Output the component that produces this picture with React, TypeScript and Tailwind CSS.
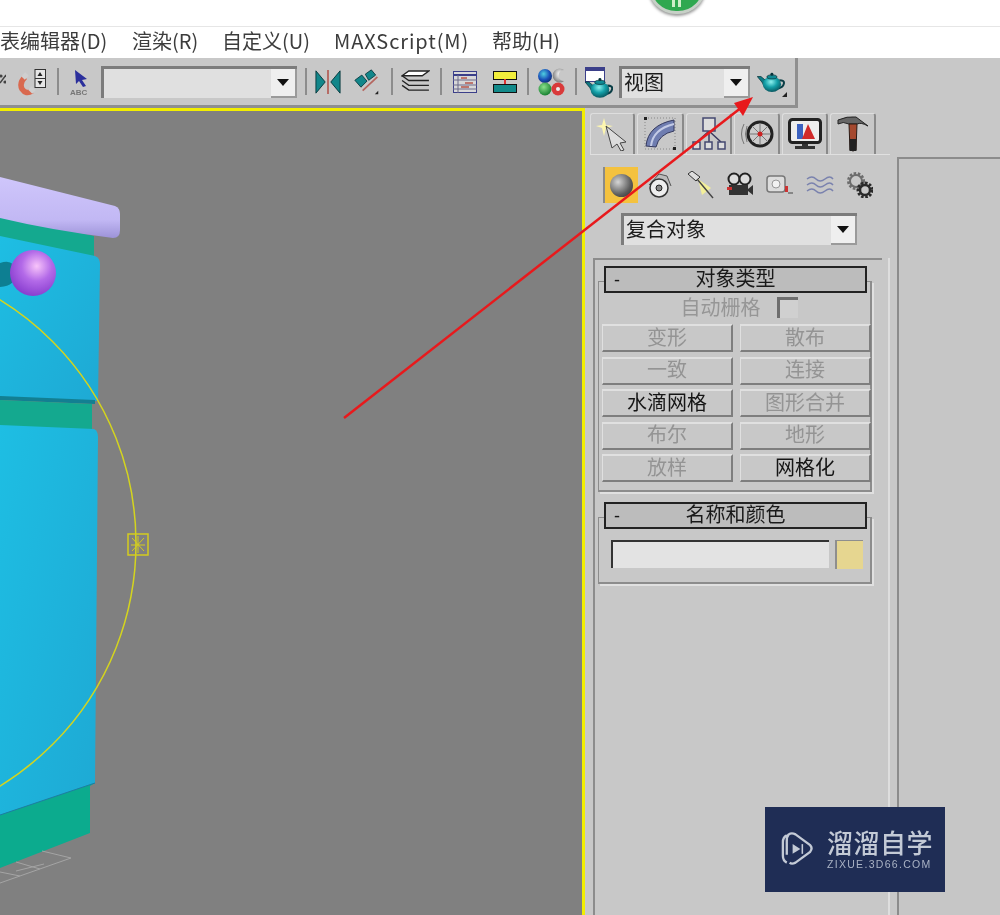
import React from 'react';

const FONT = "font-['Noto_Sans_CJK_SC','Noto_Sans',sans-serif]";

const Teapot = ({ className }: { className: string }) => (
  <svg viewBox="0 0 30 24" className={className}>
    <defs>
      <radialGradient id="pot" cx="0.45" cy="0.35" r="0.75">
        <stop offset="0" stopColor="#8df0ee" />
        <stop offset="0.45" stopColor="#14a0a8" />
        <stop offset="1" stopColor="#07414a" />
      </radialGradient>
    </defs>
    <path d="M0 6 L4 6 L10 11 L8 17 L5 12 Z" fill="#0e7a84" stroke="#07333a" strokeWidth="0.8" />
    <path d="M24 10 Q30 10 29 14 Q28 18 23 19" fill="none" stroke="#0a3e46" strokeWidth="2.2" />
    <ellipse cx="16" cy="14.5" rx="10" ry="8.5" fill="url(#pot)" />
    <ellipse cx="16" cy="6.5" rx="5.5" ry="2.2" fill="#118a94" stroke="#08343b" strokeWidth="0.8" />
    <circle cx="16" cy="3.5" r="1.6" fill="#08343b" />
  </svg>
);

const Sep = ({ ml }: { ml: string }) => <div className={`h-[27px] w-[2px] shrink-0 bg-[#8c8c8c] ${ml}`} />;

const Dropdown = ({ w, h, text, ml }: { w: string; h: string; text?: string; ml: string }) => (
  <div className={`flex ${w} ${h} ${ml} shrink-0 border-t-[3px] border-l-[3px] border-[#7c7c7c] bg-[#e0e0e0]`}>
    <span className={`flex-1 pl-[2px] text-[20px] leading-[26px] text-[#1c1c1c] ${FONT}`}>{text}</span>
    <div className="flex w-[26px] items-center justify-center border-r-[2px] border-b-[2px] border-[#9a9a9a] bg-[#efefef]">
      <svg viewBox="0 0 12 7" className="h-[7px] w-[12px]">
        <path d="M0 0 H12 L6 7 Z" fill="#111" />
      </svg>
    </div>
  </div>
);

const MainToolbar = () => (
  <div className="flex h-[50px] w-[798px] shrink-0 items-center border-r-[3px] border-b-[3px] border-[#8f8f8f]">
    <svg viewBox="0 0 6 12" className="mt-[15px] h-[12px] w-[6px] shrink-0 self-start">
      <path d="M0 10 L6 2" stroke="#444" strokeWidth="1.4" />
      <circle cx="1" cy="3" r="1.6" fill="#444" />
      <circle cx="5" cy="9" r="1.6" fill="#444" />
    </svg>
    <svg viewBox="0 0 28 28" className="ml-[12px] h-[28px] w-[28px] shrink-0">
      <path d="M7 9 Q1 15 4 21 Q8 27 14 23" fill="none" stroke="#d9694f" strokeWidth="5.5" />
      <path d="M9 6 L5 10 M12 20 L16 24" stroke="#cfcfcf" strokeWidth="5" />
      <rect x="17" y="1.5" width="10.5" height="18" fill="#e6e6e6" stroke="#333" />
      <path d="M17 10.5 H28" stroke="#333" />
      <path d="M22 4 L19.5 8 H24.5 Z M22 17 L19.5 13 H24.5 Z" fill="#222" />
    </svg>
    <Sep ml="ml-[11px]" />
    <div className="relative ml-[11px] h-[28px] w-[22px] shrink-0">
      <svg viewBox="0 0 22 20" className="h-[20px] w-[22px]">
        <path d="M5 2 L17 11 L12 12 L16 18 L13 19 L9 13 L6 16 Z" fill="#2b2f9c" />
      </svg>
      <span className="absolute bottom-[-1px] left-0 font-['Liberation_Sans',sans-serif] text-[8px] leading-[8px] font-bold text-[#777]">ABC</span>
    </div>
    <Dropdown w="w-[196px]" h="h-[32px]" ml="ml-[9px]" />
    <Sep ml="ml-[8px]" />
    <svg viewBox="0 0 28 28" className="ml-[8px] h-[28px] w-[26px] shrink-0">
      <path d="M1 2 L11 14 L1 26 Z M27 2 L17 14 L27 26 Z" fill="#12868a" stroke="#08383c" />
      <path d="M14 1 V27" stroke="#b5665f" strokeWidth="2" />
    </svg>
    <svg viewBox="0 0 30 30" className="ml-[13px] h-[28px] w-[26px] shrink-0">
      <path d="M1 13 L9 7 L15 14 L8 21 Z M13 6 L20 1 L25 7 L17 13 Z" fill="#12868a" stroke="#08383c" />
      <path d="M10 25 L27 9" stroke="#b5665f" strokeWidth="2" />
      <path d="M24 29 L28 25 V29 Z" fill="#222" />
    </svg>
    <Sep ml="ml-[11px]" />
    <svg viewBox="0 0 30 24" className="ml-[8px] h-[23px] w-[29px] shrink-0">
      <path d="M1 6 L8 1 H29 L22 6 Z" fill="#fff" stroke="#222" strokeWidth="1.4" />
      <path d="M1 6 L8 11 H29 M1 11 L8 16 H29 M1 16 L8 21 H29" fill="none" stroke="#222" strokeWidth="1.4" />
    </svg>
    <Sep ml="ml-[10px]" />
    <svg viewBox="0 0 24 22" className="ml-[11px] h-[22px] w-[24px] shrink-0">
      <rect x="0.5" y="0.5" width="23" height="21" fill="#d8d8d8" stroke="#3b3f8a" />
      <path d="M0 4 H24" stroke="#3b3f8a" strokeWidth="2" />
      <path d="M5 4 V22 M0 9 H24 M0 14 H24 M0 18 H24" stroke="#6d6a8a" />
      <path d="M8 7 H14 M12 12 H20 M8 16 H16" stroke="#b5554a" strokeWidth="1.5" />
    </svg>
    <svg viewBox="0 0 24 22" className="ml-[16px] h-[22px] w-[24px] shrink-0">
      <rect x="0.5" y="0.5" width="23" height="8" fill="#f2ee3c" stroke="#111" />
      <rect x="0.5" y="13.5" width="23" height="8" fill="#128a8a" stroke="#111" />
      <path d="M12 8 V13" stroke="#d33" strokeWidth="2" />
    </svg>
    <Sep ml="ml-[10px]" />
    <svg viewBox="0 0 28 28" className="ml-[8px] h-[28px] w-[28px] shrink-0">
      <defs>
        <radialGradient id="mb" cx="0.4" cy="0.35" r="0.7">
          <stop offset="0" stopColor="#4fd0e0" />
          <stop offset="0.6" stopColor="#1a50b8" />
          <stop offset="1" stopColor="#0c2a70" />
        </radialGradient>
        <radialGradient id="mg" cx="0.4" cy="0.35" r="0.7">
          <stop offset="0" stopColor="#8ae08a" />
          <stop offset="1" stopColor="#0f7a2a" />
        </radialGradient>
        <radialGradient id="mw" cx="0.6" cy="0.4" r="0.7">
          <stop offset="0" stopColor="#ffffff" />
          <stop offset="1" stopColor="#6c6c6c" />
        </radialGradient>
      </defs>
      <circle cx="8" cy="8" r="7" fill="url(#mb)" />
      <path d="M27 2 A7 7 0 1 0 27 13 A5 5 0 0 1 27 2 Z" fill="url(#mw)" />
      <circle cx="8" cy="21" r="6.5" fill="url(#mg)" />
      <circle cx="21" cy="21" r="6.5" fill="#d93a3a" />
      <circle cx="21" cy="21" r="2" fill="#eee" />
    </svg>
    <Sep ml="ml-[10px]" />
    <div className="relative ml-[8px] h-[28px] w-[28px] shrink-0">
      <div className="mt-[-1px] h-[15px] w-[20px] border border-t-[4px] border-[#3b3f8a] bg-white" />
      <Teapot className="absolute bottom-[-3px] left-0 h-[23px] w-[28px]" />
    </div>
    <Dropdown w="w-[131px]" h="h-[32px]" ml="ml-[6px]" text="视图" />
    <div className="relative ml-[7px] h-[22px] w-[28px] shrink-0">
      <Teapot className="h-[22px] w-[28px]" />
      <svg viewBox="0 0 6 6" className="absolute right-[-2px] bottom-[-4px] h-[5px] w-[5px]">
        <path d="M0 6 L6 0 V6 Z" fill="#222" />
      </svg>
    </div>
  </div>
);

const TabIcon = ({ id }: { id: number }) => {
  if (id === 0)
    return (
      <svg viewBox="0 0 34 34" className="h-[34px] w-[34px]">
        <path d="M9 1 L11 8 L18 9 L11 11 L9 19 L7 11 L1 9 L7 8 Z" fill="#fdf6b0" />
        <path d="M11 9 L31 25 L25 26 L29 33 L26 34 L22 27 L17 31 Z" fill="#dcdcdc" stroke="#444" />
      </svg>
    );
  if (id === 1)
    return (
      <svg viewBox="0 0 34 34" className="h-[34px] w-[34px]">
        <path d="M2 1 H32 V32 H2 Z" fill="none" stroke="#888" strokeDasharray="1 2" />
        <path d="M3 29 Q5 8 31 3 L31 14 Q16 17 13 30 Z" fill="#6f7db0" stroke="#34395e" />
        <path d="M8 29 Q10 12 31 7" fill="none" stroke="#c3cbe6" strokeWidth="2" />
        <rect x="1" y="0" width="3" height="3" fill="#222" />
        <rect x="30" y="30" width="3" height="3" fill="#222" />
      </svg>
    );
  if (id === 2)
    return (
      <svg viewBox="0 0 34 34" className="h-[34px] w-[34px]">
        <path d="M17 14 L5 25 M17 14 L17 25 M17 14 L29 25" stroke="#3a3a60" strokeWidth="1.5" />
        <rect x="11" y="1" width="12" height="13" fill="#ddd" stroke="#444870" strokeWidth="1.5" />
        <rect x="1" y="25" width="7" height="7" fill="#ddd" stroke="#444870" strokeWidth="1.5" />
        <rect x="13" y="25" width="7" height="7" fill="#ddd" stroke="#444870" strokeWidth="1.5" />
        <rect x="26" y="25" width="7" height="7" fill="#ddd" stroke="#444870" strokeWidth="1.5" />
      </svg>
    );
  if (id === 3)
    return (
      <svg viewBox="0 0 36 28" className="h-[28px] w-[36px]">
        <path d="M5 4 Q0 14 5 24 M8 6 Q5 14 8 22" fill="none" stroke="#777" />
        <circle cx="21" cy="14" r="12" fill="#ccc" stroke="#222" strokeWidth="3" />
        <path d="M21 3 V25 M10 14 H32 M13 6 L29 22 M29 6 L13 22" stroke="#777" />
        <circle cx="21" cy="14" r="2.5" fill="#c22" />
      </svg>
    );
  if (id === 4)
    return (
      <svg viewBox="0 0 34 32" className="h-[32px] w-[34px]">
        <rect x="1.5" y="1.5" width="31" height="23" rx="3" fill="#eee" stroke="#222" strokeWidth="3" />
        <rect x="9" y="6" width="6" height="15" fill="#3c62c0" />
        <path d="M14 21 L20 6 L27 21 Z" fill="#d02a2a" />
        <path d="M14 26 H20 V28 H27 V31 H7 V28 H14 Z" fill="#333" />
      </svg>
    );
  return (
    <svg viewBox="0 0 32 36" className="h-[36px] w-[32px]">
      <path d="M1 4 Q10 0 19 1 L31 10 Q24 6 20 8 H12 Q6 5 1 8 Z" fill="#666" stroke="#222" />
      <path d="M12 8 H20 L19 34 Q16 36 13 34 Z" fill="#a5492f" stroke="#2a1a14" />
      <path d="M12.5 23 H19.5 V35 H12.5 Z" fill="#222" />
    </svg>
  );
};

const tabWidths = ['w-[45px]', 'w-[47px]', 'w-[46px]', 'w-[46px]', 'w-[46px]', 'w-[46px]'];

const SubIcons = () => (
  <div className="ml-[18px] flex h-[36px] items-center">
    <div className="flex h-[36px] w-[35px] items-center justify-center border-l-[2px] border-[#8a8a8a] bg-[#f4c23f]">
      <div className="h-[23px] w-[23px] rounded-full bg-[radial-gradient(circle_at_35%_35%,#d5d5d5,#5c5c5c_60%,#2c2c2c)]" />
    </div>
    <svg viewBox="0 0 28 28" className="ml-[7px] h-[28px] w-[28px] shrink-0">
      <path d="M4 14 L14 3 L22 5 L26 15" fill="#bbb" stroke="#555" />
      <circle cx="14" cy="17" r="9" fill="#eee" stroke="#333" strokeWidth="1.5" />
      <circle cx="14" cy="17" r="3" fill="#888" stroke="#222" />
    </svg>
    <svg viewBox="0 0 28 28" className="ml-[14px] h-[28px] w-[28px] shrink-0">
      <path d="M1 3 L5 0 L13 6 L9 10 Z" fill="#ddd" stroke="#333" />
      <path d="M11 8 L24 17 L15 24 Z" fill="#f3ef9a" />
      <path d="M10 8 L26 27" stroke="#444" strokeWidth="1.4" />
    </svg>
    <svg viewBox="0 0 28 26" className="ml-[11px] h-[26px] w-[28px] shrink-0">
      <circle cx="8" cy="7" r="5.5" fill="#ddd" stroke="#222" strokeWidth="2" />
      <circle cx="19" cy="7" r="5.5" fill="#ddd" stroke="#222" strokeWidth="2" />
      <rect x="3" y="13" width="19" height="10" fill="#333" />
      <rect x="1" y="15" width="5" height="3" fill="#c33" />
      <path d="M22 17 L27 13 V23 L22 19 Z" fill="#333" />
    </svg>
    <svg viewBox="0 0 28 22" className="ml-[12px] h-[22px] w-[28px] shrink-0">
      <rect x="1" y="2" width="18" height="16" rx="3" fill="#ddd" stroke="#777" strokeWidth="1.5" />
      <circle cx="10" cy="10" r="4" fill="#f2f2f2" stroke="#999" />
      <path d="M19 12 H22 V18 H19 Z" fill="#c33" />
      <path d="M22 19 H27" stroke="#444" />
    </svg>
    <svg viewBox="0 0 28 20" className="ml-[12px] h-[20px] w-[28px] shrink-0">
      <path d="M1 4 Q6 0 10 4 T19 4 T27 4 M1 10 Q6 6 10 10 T19 10 T27 10 M1 16 Q6 12 10 16 T19 16 T27 16" fill="none" stroke="#7a82ae" strokeWidth="1.5" />
    </svg>
    <svg viewBox="0 0 26 26" className="ml-[13px] h-[26px] w-[26px] shrink-0">
      <circle cx="9" cy="9" r="6" fill="none" stroke="#6d6d6d" strokeWidth="2" />
      <circle cx="9" cy="9" r="7.5" fill="none" stroke="#6d6d6d" strokeWidth="3" strokeDasharray="2.5 1.6" />
      <circle cx="18" cy="18" r="5" fill="none" stroke="#2a2a2a" strokeWidth="2.5" />
      <circle cx="18" cy="18" r="7" fill="none" stroke="#2a2a2a" strokeWidth="3" strokeDasharray="2.5 1.6" />
    </svg>
  </div>
);

const RollHeader = ({ title }: { title: string }) => (
  <div className={`relative z-10 ml-[6px] flex h-[27px] w-[263px] items-center justify-center border-2 border-[#222] bg-[#bcbcbc] text-[20px] leading-none text-[#1a1a1a] ${FONT}`}>
    <span className="absolute left-[8px] font-['Liberation_Sans',sans-serif] text-[18px]">-</span>
    <span className="mt-[-4px]">{title}</span>
  </div>
);

const ObjButton = ({ label, on }: { label: string; on?: boolean }) => (
  <div className={`flex h-[28px] w-[131px] items-center justify-center border-t-2 border-r-2 border-b-2 border-l border-t-[#e0e0e0] border-r-[#7e7e7e] border-b-[#7e7e7e] border-l-[#e0e0e0] bg-[#c8c8c8] pb-[3px] text-[20px] leading-none ${on ? 'text-[#151515]' : 'text-[#949494]'} ${FONT}`}>
    {label}
  </div>
);

const objectButtons: [string, boolean?][] = [
  ['变形'], ['散布'], ['一致'], ['连接'], ['水滴网格', true], ['图形合并'], ['布尔'], ['地形'], ['放样'], ['网格化', true],
];

const CommandPanel = () => (
  <div className="flex h-full w-[312px] shrink-0 flex-col">
    <div className="mt-[5px] ml-[5px] flex h-[42px] w-[300px] gap-[2px] border-b border-[#e0e0e0]">
      {tabWidths.map((w, i) => (
        <div key={i} className={`flex ${w} items-center justify-center rounded-t-[3px] border-t border-r-2 border-l border-t-[#dedede] border-r-[#8a8a8a] border-l-[#dedede]`}>
          <TabIcon id={i} />
        </div>
      ))}
    </div>
    <div className="mt-[12px]">
      <SubIcons />
    </div>
    <Dropdown w="w-[236px]" h="h-[32px]" ml="ml-[36px] mt-[10px]" text="复合对象" />
    <div className="mt-[13px] ml-[8px] flex w-[297px] flex-1 flex-col border-r-2 border-l-2 border-r-[#dedede] border-l-[#8c8c8c]">
      <div className="h-[2px] w-[287px] bg-[#8c8c8c]" />
      <div className="mt-[6px] ml-[3px]">
        <RollHeader title="对象类型" />
        <div className="mt-[-12px] h-[211px] w-[274px] border border-r-2 border-b-2 border-[#8c8c8c] pt-[15px] pl-[3px] shadow-[2px_2px_0_#e0e0e0]">
          <div className={`flex h-[26px] items-center justify-center gap-[16px] pb-[6px] pl-[6px] text-[20px] leading-none text-[#969696] ${FONT}`}>
            <span>自动栅格</span>
            <div className="h-[21px] w-[21px] border-t-[3px] border-l-[3px] border-[#6e6e6e] bg-[#d0d0d0]" />
          </div>
          <div className="mt-[1px] grid w-[269px] grid-cols-[131px_131px] gap-x-[7px] gap-y-[4.5px]">
            {objectButtons.map(([label, on]) => (
              <ObjButton key={label} label={label} on={on} />
            ))}
          </div>
        </div>
        <div className="mt-[10px]">
          <RollHeader title="名称和颜色" />
        </div>
        <div className="mt-[-12px] flex h-[67px] w-[274px] gap-[6px] border border-r-2 border-b-2 border-[#8c8c8c] pt-[22px] pl-[12px] shadow-[2px_2px_0_#e0e0e0]">
          <div className="h-[28px] w-[218px] border-t-[2px] border-l-[2px] border-[#333] bg-[#e3e3e3]" />
          <div className="h-[29px] w-[28px] border-t border-l-[2px] border-[#8e8e8e] bg-[#e6d690]" />
        </div>
      </div>
    </div>
  </div>
);

const Scene = () => (
  <svg viewBox="0 111 582 804" className="absolute inset-0 h-full w-full">
    <defs>
      <linearGradient id="door" x1="0" y1="0" x2="1" y2="1">
        <stop offset="0" stopColor="#1ebee3" />
        <stop offset="1" stopColor="#1ea9d4" />
      </linearGradient>
      <linearGradient id="lilac" x1="0" y1="0" x2="0" y2="1">
        <stop offset="0" stopColor="#cfc6fb" />
        <stop offset="0.7" stopColor="#c2b8f4" />
        <stop offset="1" stopColor="#9d93d8" />
      </linearGradient>
      <radialGradient id="knob" cx="0.58" cy="0.35" r="0.65">
        <stop offset="0" stopColor="#f8c4fa" />
        <stop offset="0.5" stopColor="#b36ae8" />
        <stop offset="1" stopColor="#8a3fd0" />
      </radialGradient>
    </defs>
    <path d="M0 215 L94 236 V258 H0 Z" fill="#14a98f" />
    <path d="M0 236 L95 256 Q100 258 100 264 L98 401 L0 397 Z" fill="url(#door)" />
    <path d="M0 396 L95 400 V404 L0 400 Z" fill="#127f92" />
    <path d="M0 400 L92 404 V432 H0 Z" fill="#14a98f" />
    <path d="M0 425 L94 429 Q98 431 98 437 L95 783 L0 815 Z" fill="url(#door)" />
    <path d="M0 815 L95 783 L90 786 V833 L0 868 Z" fill="#0cab8e" />
    <path d="M0 815 L95 783" stroke="#1a7fa3" />
    <path d="M0 177 L115 206 Q120 208 120 214 V230 Q120 238 113 238 Q50 230 0 218 Z" fill="url(#lilac)" />
    <path d="M0 263 Q14 258 16 272 Q16 286 0 287 Z" fill="#0d7f92" />
    <circle cx="33" cy="273" r="23" fill="url(#knob)" />
    <circle cx="-149" cy="543" r="285" fill="none" stroke="#d4d41e" strokeWidth="1.5" />
    <rect x="128" y="534" width="20" height="21" fill="none" stroke="#d4cc1e" strokeWidth="1.5" />
    <path d="M132 538 L144 551 M144 538 L132 551 M138 536 V553 M131 545 H145" stroke="#d4cc1e" />
    <path d="M0 883 L71 858 L42 851 M16 871 L44 864 M0 872 L20 876 M40 869 L16 862" fill="none" stroke="#a4a4a4" />
  </svg>
);

const App: React.FC = () => {
  return (
    <div className="relative flex h-[915px] w-[1000px] flex-col overflow-hidden bg-[#c8c8c8] blur-[0.4px]">
      {/* top strip */}
      <div className="relative h-[27px] shrink-0 border-b border-[#e6e6e6] bg-white">
        <div className="absolute top-[-42px] left-[648px] h-[56px] w-[58px] rounded-full border-[3px] border-[#c7d0c7] bg-[#2fa84f] shadow-[0_2px_3px_#999]" />
        <div className="absolute top-[-3px] left-[672px] flex gap-[3px]">
          <div className="h-[10px] w-[3px] bg-[#cfeec9]" />
          <div className="h-[10px] w-[3px] bg-[#cfeec9]" />
        </div>
      </div>
      {/* menu */}
      <div className={`flex h-[31px] shrink-0 items-center gap-[24px] bg-white pb-[3px] text-[20px] leading-none whitespace-nowrap text-[#3c3c3c] ${FONT}`}>
        <span className="w-[108px]">表编辑器(D)</span>
        <span className="w-[66px]">渲染(R)</span>
        <span className="w-[88px]">自定义(U)</span>
        <span className="w-[134px] tracking-[0.9px]">MAXScript(M)</span>
        <span>帮助(H)</span>
      </div>
      <MainToolbar />
      <div className="flex min-h-0 flex-1">
        <div className="relative w-[585px] shrink-0 border-t-[3px] border-r-[3px] border-[#f2ee00] bg-[#808080]">
          <div className="absolute inset-0 overflow-hidden">
            <Scene />
          </div>
        </div>
        <CommandPanel />
        <div className="flex-1 pt-[49px]">
          <div className="h-full border-t-[2px] border-l-[2px] border-[#8c8c8c] bg-[#c6c6c6]" />
        </div>
      </div>
      {/* annotation arrow */}
      <svg viewBox="0 0 1000 915" className="absolute inset-0 h-full w-full">
        <path d="M344 418 L742 107" stroke="#e8191c" strokeWidth="2.5" />
        <path d="M753 97 L734 103 L743 116 Z" fill="#e8191c" />
      </svg>
      {/* watermark */}
      <div className="absolute top-[807px] left-[765px] flex h-[85px] w-[180px] items-center bg-[#1f2d55] pb-[3px]">
        <svg viewBox="0 0 36 38" className="ml-[14px] h-[38px] w-[35px] shrink-0">
          <path d="M8 6 Q4 8 4 13 V27 Q4 32 8 34 M11 34 Q13 36 17 34 L32 23 Q35 19 32 16 L17 5 Q13 3 10 5 Q8 7 8 12 V26" fill="none" stroke="#c3cad6" strokeWidth="2.4" />
          <path d="M14 15 L22 20 L14 25 Z" fill="#c3cad6" />
          <path d="M24 15 V25" stroke="#c3cad6" strokeWidth="1.6" />
        </svg>
        <div className="ml-[13px] flex flex-col">
          <span className={`text-[26px] leading-[30px] font-medium tracking-[0.5px] whitespace-nowrap text-[#c3cad6] ${FONT}`}>溜溜自学</span>
          <span className="mt-[1px] font-['Liberation_Sans',sans-serif] text-[10.5px] leading-[12px] tracking-[1.3px] whitespace-nowrap text-[#a9b2c4]">ZIXUE.3D66.COM</span>
        </div>
      </div>
    </div>
  );
};

export default App;
